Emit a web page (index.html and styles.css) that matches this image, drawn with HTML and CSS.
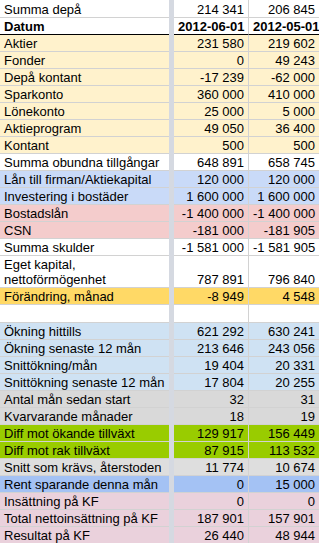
FILE: index.html
```html
<!DOCTYPE html>
<html>
<head>
<meta charset="utf-8">
<link rel="stylesheet" href="styles.css">
</head>
<body>
<div class="sheet">
  <div class="row first"><div class="c l">Summa depå</div><div class="sep"></div><div class="c n">214 341</div><div class="c n last">206 845</div></div>
  <div class="row head"><div class="c l">Datum</div><div class="sep"></div><div class="c n">2012-06-01</div><div class="c n last">2012-05-01</div></div>
  <div class="row tan"><div class="c l">Aktier</div><div class="sep"></div><div class="c n">231 580</div><div class="c n last">219 602</div></div>
  <div class="row tan"><div class="c l">Fonder</div><div class="sep"></div><div class="c n">0</div><div class="c n last">49 243</div></div>
  <div class="row tan"><div class="c l">Depå kontant</div><div class="sep"></div><div class="c n">-17 239</div><div class="c n last">-62 000</div></div>
  <div class="row tan"><div class="c l">Sparkonto</div><div class="sep"></div><div class="c n">360 000</div><div class="c n last">410 000</div></div>
  <div class="row tan"><div class="c l">Lönekonto</div><div class="sep"></div><div class="c n">25 000</div><div class="c n last">5 000</div></div>
  <div class="row tan"><div class="c l">Aktieprogram</div><div class="sep"></div><div class="c n">49 050</div><div class="c n last">36 400</div></div>
  <div class="row tan"><div class="c l">Kontant</div><div class="sep"></div><div class="c n">500</div><div class="c n last">500</div></div>
  <div class="row"><div class="c l">Summa obundna tillgångar</div><div class="sep"></div><div class="c n">648 891</div><div class="c n last">658 745</div></div>
  <div class="row blue"><div class="c l">Lån till firman/Aktiekapital</div><div class="sep"></div><div class="c n">120 000</div><div class="c n last">120 000</div></div>
  <div class="row blue"><div class="c l">Investering i bostäder</div><div class="sep"></div><div class="c n">1 600 000</div><div class="c n last">1 600 000</div></div>
  <div class="row red"><div class="c l">Bostadslån</div><div class="sep"></div><div class="c n">-1 400 000</div><div class="c n last">-1 400 000</div></div>
  <div class="row red"><div class="c l">CSN</div><div class="sep"></div><div class="c n">-181 000</div><div class="c n last">-181 905</div></div>
  <div class="row"><div class="c l">Summa skulder</div><div class="sep"></div><div class="c n">-1 581 000</div><div class="c n last">-1 581 905</div></div>
  <div class="row tall"><div class="c l">Eget kapital,<br>nettoförmögenhet</div><div class="sep"></div><div class="c n">787 891</div><div class="c n last">796 840</div></div>
  <div class="row gold"><div class="c l">Förändring, månad</div><div class="sep"></div><div class="c n">-8 949</div><div class="c n last">4 548</div></div>
  <div class="row blank"><div class="c l"></div><div class="sep"></div><div class="c n"></div><div class="c n last"></div></div>
  <div class="row sky"><div class="c l">Ökning hittills</div><div class="sep"></div><div class="c n">621 292</div><div class="c n last">630 241</div></div>
  <div class="row sky"><div class="c l">Ökning senaste 12 mån</div><div class="sep"></div><div class="c n">213 646</div><div class="c n last">243 056</div></div>
  <div class="row sky"><div class="c l">Snittökning/mån</div><div class="sep"></div><div class="c n">19 404</div><div class="c n last">20 331</div></div>
  <div class="row sky"><div class="c l">Snittökning senaste 12 mån</div><div class="sep"></div><div class="c n">17 804</div><div class="c n last">20 255</div></div>
  <div class="row gray"><div class="c l">Antal mån sedan start</div><div class="sep"></div><div class="c n">32</div><div class="c n last">31</div></div>
  <div class="row gray"><div class="c l">Kvarvarande månader</div><div class="sep"></div><div class="c n">18</div><div class="c n last">19</div></div>
  <div class="row green"><div class="c l">Diff mot ökande tillväxt</div><div class="sep"></div><div class="c n">129 917</div><div class="c n last">156 449</div></div>
  <div class="row green"><div class="c l">Diff mot rak tillväxt</div><div class="sep"></div><div class="c n">87 915</div><div class="c n last">113 532</div></div>
  <div class="row gray2"><div class="c l">Snitt som krävs, återstoden</div><div class="sep"></div><div class="c n">11 774</div><div class="c n last">10 674</div></div>
  <div class="row corn"><div class="c l">Rent sparande denna mån</div><div class="sep"></div><div class="c n">0</div><div class="c n last">15 000</div></div>
  <div class="row mag"><div class="c l">Insättning på KF</div><div class="sep"></div><div class="c n">0</div><div class="c n last">0</div></div>
  <div class="row mag"><div class="c l">Total nettoinsättning på KF</div><div class="sep"></div><div class="c n">187 901</div><div class="c n last">157 901</div></div>
  <div class="row mag"><div class="c l">Resultat på KF</div><div class="sep"></div><div class="c n">26 440</div><div class="c n last">48 944</div></div>
</div>
</body>
</html>
```
FILE: styles.css
```css
html, body {
  margin: 0;
  padding: 0;
  background: #ffffff;
}
.sheet {
  width: 319px;
  font-family: "Liberation Sans", Arial, sans-serif;
  font-size: 13px;
  color: #000;
  overflow: hidden;
}
.row {
  display: grid;
  grid-template-columns: 169px 5px 75px 70px;
}
.c {
  padding: 1px 4px 0 4px;
  line-height: 15px;
  height: 15px;
  border-bottom: 1px solid #d2d2d2;
  white-space: nowrap;
  overflow: hidden;
}
.l {
  padding-left: 4px;
  padding-right: 0;
}
.n {
  text-align: right;
  border-right: 1px solid #d2d2d2;
}
.n.last {
  border-right: 0;
}
.sep {
  background: #d5d9e1;
}
.first .c {
  padding-top: 2px;
}
.head .c {
  font-weight: bold;
  border-bottom-color: #000;
}
.tall .c {
  height: 30px;
}
.tall .n {
  padding-top: 16px;
  height: 15px;
}
.blank .c {
  height: 16px;
}
.tan .c { background: #fff2cc; }
.blue .c { background: #c9daf8; }
.red .c { background: #f4cccc; }
.gold .c { background: #ffd966; }
.sky .c { background: #cfe2f3; }
.gray .c { background: #d9d9d9; }
.gray2 .c { background: #dedede; }
.green .c { background: #99cc00; }
.corn .c { background: #a4c2f4; }
.mag .c { background: #ead1dc; }
```
